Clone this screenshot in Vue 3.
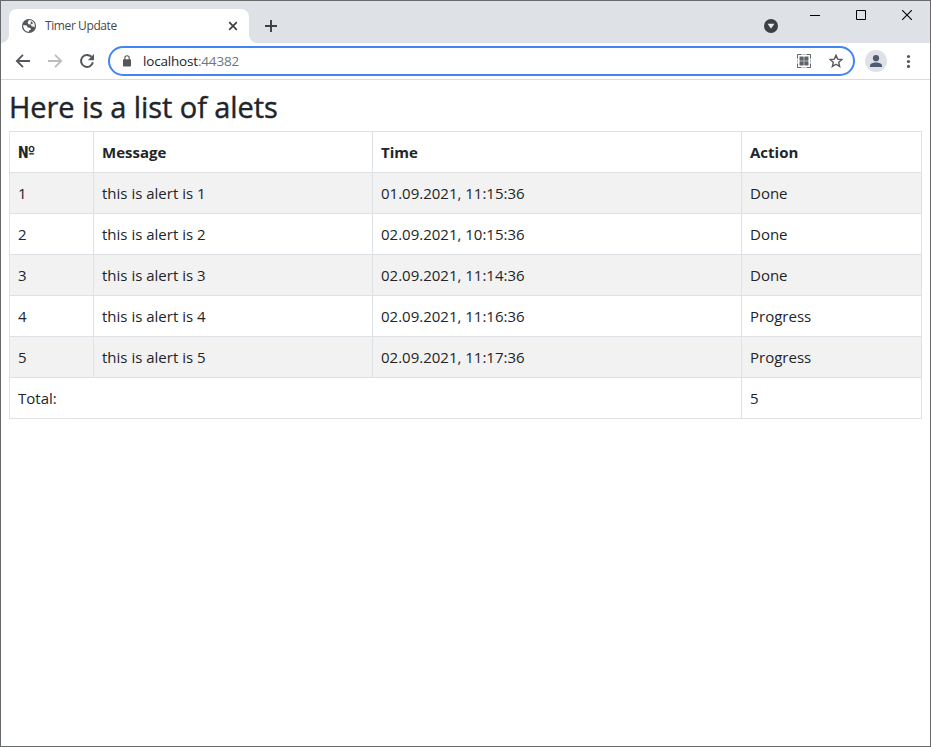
<script setup>
const alerts = [
  { id: 1, time: '01.09.2021, 11:15:36', action: 'Done' },
  { id: 2, time: '02.09.2021, 10:15:36', action: 'Done' },
  { id: 3, time: '02.09.2021, 11:14:36', action: 'Done' },
  { id: 4, time: '02.09.2021, 11:16:36', action: 'Progress' },
  { id: 5, time: '02.09.2021, 11:17:36', action: 'Progress' },
]
</script>

<template>
  <div class="window">
    <header class="strip">
      <div class="tab">
        <svg class="globe" width="16" height="16" viewBox="0 0 16 16">
          <circle cx="8" cy="8" r="7.1" fill="#54585d" />
          <path d="M8.1 2.1 6.6 4.3 7.4 6.2 9.8 6.6 10.6 8.3 13.8 9.1C14.3 6 12.6 2.6 8.1 2.1ZM2.2 7.1C2 10.8 4.3 13.7 7.6 13.9L8.3 12.2 10 11.4 9.4 9.9 6.9 9.5 5.6 7.6Z" fill="#fff" />
          <path d="m9.8 3.2 2.2 1.5-.9 1.7-1.5-.6Z" fill="#54585d" />
        </svg>
        <span class="tab-title">Timer Update</span>
        <svg class="tab-close" width="10" height="10" viewBox="0 0 10 10">
          <path d="m1.2 1.2 7.6 7.6m0-7.6L1.2 8.8" stroke="#3c4043" stroke-width="1.7" />
        </svg>
      </div>
      <svg class="plus" width="12" height="12" viewBox="0 0 12 12">
        <path d="M6 0v12M0 6h12" stroke="#3c4043" stroke-width="1.9" />
      </svg>
      <svg class="search-tabs" width="14" height="14" viewBox="0 0 14 14">
        <circle cx="7" cy="7" r="7" fill="#3c4043" />
        <path d="M3.6 4.8h6.8L7 9.8Z" fill="#e8eaed" />
      </svg>
      <div class="controls">
        <svg width="10" height="10" viewBox="0 0 10 10"><path d="M0 5.5h10" stroke="#000" /></svg>
        <svg width="10" height="10" viewBox="0 0 10 10"><path d="M.5.5h9v9h-9Z" fill="none" stroke="#000" /></svg>
        <svg width="10" height="10" viewBox="0 0 10 10"><path d="m0 0 10 10M10 0 0 10" stroke="#000" stroke-width="1.1" /></svg>
      </div>
    </header>

    <nav class="toolbar">
      <svg class="nav-icon" width="16" height="16" viewBox="0 0 16 16">
        <path d="M15 8H2.2M8 1.8 1.8 8 8 14.2" fill="none" stroke="#54585d" stroke-width="1.8" />
      </svg>
      <svg class="nav-icon" width="16" height="16" viewBox="0 0 16 16">
        <path d="M1 8h12.8M8 1.8 14.2 8 8 14.2" fill="none" stroke="#babcbe" stroke-width="1.8" />
      </svg>
      <svg class="nav-icon" width="16" height="16" viewBox="0 0 16 16">
        <path d="M13.9 9.3A6 6 0 1 1 12.4 3.8" fill="none" stroke="#54585d" stroke-width="2" />
        <path d="M15 1v6.2H8.8Z" fill="#54585d" />
      </svg>
      <div class="omnibox">
        <svg class="lock" width="10" height="12" viewBox="0 0 10 12">
          <rect x="1" y="4.2" width="8" height="7.3" rx=".9" fill="#54585d" />
          <path d="M2.8 5V3a2.2 2.2 0 0 1 4.4 0v2" fill="none" stroke="#54585d" stroke-width="1.1" />
        </svg>
        <span class="url">localhost<span class="port">:44382</span></span>
        <svg class="qr" width="14" height="14" viewBox="0 0 14 14">
          <path d="M.5 4.5V.5H4.5M9.5.5h4V4.5M13.5 9.5v4H9.5M4.5 13.5H.5V9.5" fill="none" stroke="#5f6368" />
          <path d="M5.5.5h3M5.5 13.5h3M.5 5.5v3M13.5 5.5v3" fill="none" stroke="#b4b6b9" />
          <path d="M3 3h8v8H3Z" fill="#b4b6b9" />
          <path d="M2.5 2.5h4v4h-4ZM7.5 2.5h4v4h-4ZM2.5 7.5h4v4h-4ZM7.5 7.5h4v4h-4Z" fill="#5f6368" />
        </svg>
        <svg class="star" width="14" height="14" viewBox="0 0 14 14">
          <path d="m7 1.2 1.65 3.9 4.25.4-3.2 2.8.95 4.15L7 10.25l-3.65 2.2.95-4.15-3.2-2.8 4.25-.4Z" fill="none" stroke="#54585d" stroke-width="1.4" />
        </svg>
      </div>
      <div class="avatar">
        <svg width="14" height="14" viewBox="0 0 14 14">
          <circle cx="7" cy="4.2" r="3.1" fill="#4f5b73" />
          <path d="M1 12.9v-1.5C1 9.500 4.200 8.400 7 8.400s6 1.100 6 3v1.500Z" fill="#4f5b73" />
        </svg>
      </div>
      <svg class="more" width="5" height="14" viewBox="0 0 5 14">
        <g fill="#54585d"><circle cx="2.5" cy="2.5" r="1.6" /><circle cx="2.5" cy="7.5" r="1.6" /><circle cx="2.5" cy="12.4" r="1.6" /></g>
      </svg>
    </nav>

    <main class="page">
      <h1>Here is a list of alets</h1>
      <table>
        <colgroup><col class="c-num" /><col class="c-msg" /><col class="c-time" /><col /></colgroup>
        <thead>
          <tr><th class="numero">№</th><th>Message</th><th>Time</th><th>Action</th></tr>
        </thead>
        <tbody>
          <tr v-for="a in alerts" :key="a.id">
            <td>{{ a.id }}</td>
            <td>this is alert is {{ a.id }}</td>
            <td>{{ a.time }}</td>
            <td>{{ a.action }}</td>
          </tr>
        </tbody>
        <tfoot>
          <tr><td colspan="3">Total:</td><td>{{ alerts.length }}</td></tr>
        </tfoot>
      </table>
    </main>
  </div>
</template>

<style>
body {
  margin: 0;
  background: #fff;
}
</style>

<style scoped>
.window {
  box-sizing: border-box;
  width: 931px;
  height: 747px;
  border: 1px solid #68696b;
  background: #fff;
  overflow: hidden;
  font-family: "Open Sans", "Noto Sans", sans-serif;
  color: #212529;
}
svg {
  display: block;
  flex: none;
}
.strip {
  display: flex;
  height: 42px;
  padding-left: 8px;
  background: #dee1e6;
}
.tab {
  position: relative;
  box-sizing: border-box;
  display: flex;
  align-items: center;
  width: 240px;
  height: 34px;
  margin-top: 8px;
  padding: 0 11px 0 12px;
  border-radius: 8px 8px 0 0;
  background: #fff;
}
.tab::before,
.tab::after {
  content: "";
  position: absolute;
  bottom: 0;
  width: 8px;
  height: 8px;
}
.tab::before {
  left: -8px;
  background: radial-gradient(circle at 0 0, transparent 7.5px, #fff 8.2px);
}
.tab::after {
  right: -8px;
  background: radial-gradient(circle at 100% 0, transparent 7.5px, #fff 8.2px);
}
.tab-title {
  flex: 1;
  margin-left: 8px;
  font-size: 12px;
  line-height: 16px;
  letter-spacing: -0.4px;
  color: #45494d;
}
.plus {
  margin: 19px 0 0 16px;
}
.search-tabs {
  margin: 18px 0 0 auto;
}
.controls {
  display: flex;
  gap: 36px;
  margin: 9px 18px 0 32px;
}
.toolbar {
  box-sizing: border-box;
  display: flex;
  align-items: center;
  height: 37px;
  padding: 0 19px 0 14px;
  border-bottom: 1px solid #dadce0;
}
.nav-icon {
  margin-right: 16px;
}
.omnibox {
  box-sizing: border-box;
  display: flex;
  align-items: center;
  width: 747px;
  height: 30px;
  margin-left: -3px;
  padding: 0 10px 0 12px;
  border: 2px solid #4285f4;
  border-radius: 15px;
}
.url {
  flex: 1;
  margin-left: 11px;
  font-size: 13.5px;
  line-height: 20px;
  letter-spacing: -0.18px;
}
.port {
  color: #70757a;
}
.qr {
  margin-right: 18px;
}
.avatar {
  display: flex;
  align-items: center;
  justify-content: center;
  width: 22px;
  height: 22px;
  margin: 0 auto 0 10px;
  border-radius: 50%;
  background: #dee1e6;
}
.page {
  padding: 8px;
}
h1 {
  height: 43px;
  margin: 0;
  font-size: 29px;
  font-weight: 500;
  line-height: 38px;
  letter-spacing: -0.08px;
  white-space: nowrap;
  -webkit-text-stroke: 0.4px #212529;
}
table {
  width: 913px;
  table-layout: fixed;
  border-collapse: collapse;
  font-size: 15px;
  line-height: 24px;
}
.c-num {
  width: 84px;
}
.c-msg {
  width: 279px;
}
.c-time {
  width: 369px;
}
th,
td {
  padding: 8px;
  border: 1px solid #dee2e6;
  text-align: left;
}
th {
  font-weight: 700;
}
.numero {
  font-family: Roboto, sans-serif;
  font-size: 17px;
}
tbody tr:nth-child(odd) {
  background: #f2f2f2;
}
</style>
